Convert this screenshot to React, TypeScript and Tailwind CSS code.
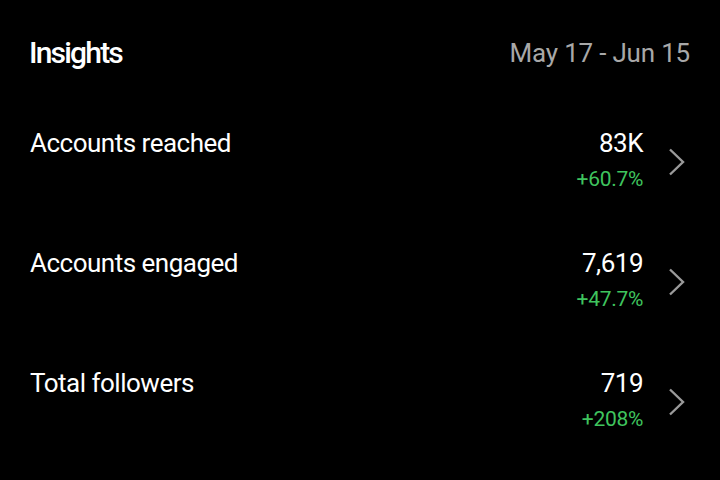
interface Stat {
  label: string
  value: string
  change: string
}

const stats: Stat[] = [
  { label: "Accounts reached", value: "83K", change: "+60.7%" },
  { label: "Accounts engaged", value: "7,619", change: "+47.7%" },
  { label: "Total followers", value: "719", change: "+208%" },
]

function Chevron() {
  return (
    <svg width="17" height="30" viewBox="0 0 17 30" fill="none" className="text-[#9a9a9a]">
      <polyline points="2,2.5 15,15 2,27.5" stroke="currentColor" strokeWidth="2.4" strokeLinejoin="miter" />
    </svg>
  )
}

export default function App() {
  return (
    <div className="w-[720px] h-[480px] bg-black text-white font-['Roboto',sans-serif] overflow-hidden">
      <div className="flex items-center justify-between pl-[29px] pr-[30px] pt-[33px]">
        <h1 className="text-[30px] leading-[40px] font-medium tracking-[-1.8px]">Insights</h1>
        <span className="text-[26px] leading-[40px] tracking-[-0.2px] text-[#a8a8a8]">May 17 - Jun 15</span>
      </div>
      <div className="flex flex-col pt-[55px]">
        {stats.map((s) => (
          <div key={s.label} className="flex items-start h-[120px] pl-[30px] pr-[35px]">
            <div className="flex-1 text-[26px] leading-[30px] tracking-[-0.5px]">{s.label}</div>
            <div className="flex flex-col items-end">
              <span className="text-[26px] leading-[30px] tracking-[-0.5px]">{s.value}</span>
              <span className="text-[21px] leading-[26px] tracking-[-0.3px] text-[#3fc45e] mt-[8px]">{s.change}</span>
            </div>
            <div className="ml-[25px] mt-[19px]">
              <Chevron />
            </div>
          </div>
        ))}
      </div>
    </div>
  )
}
